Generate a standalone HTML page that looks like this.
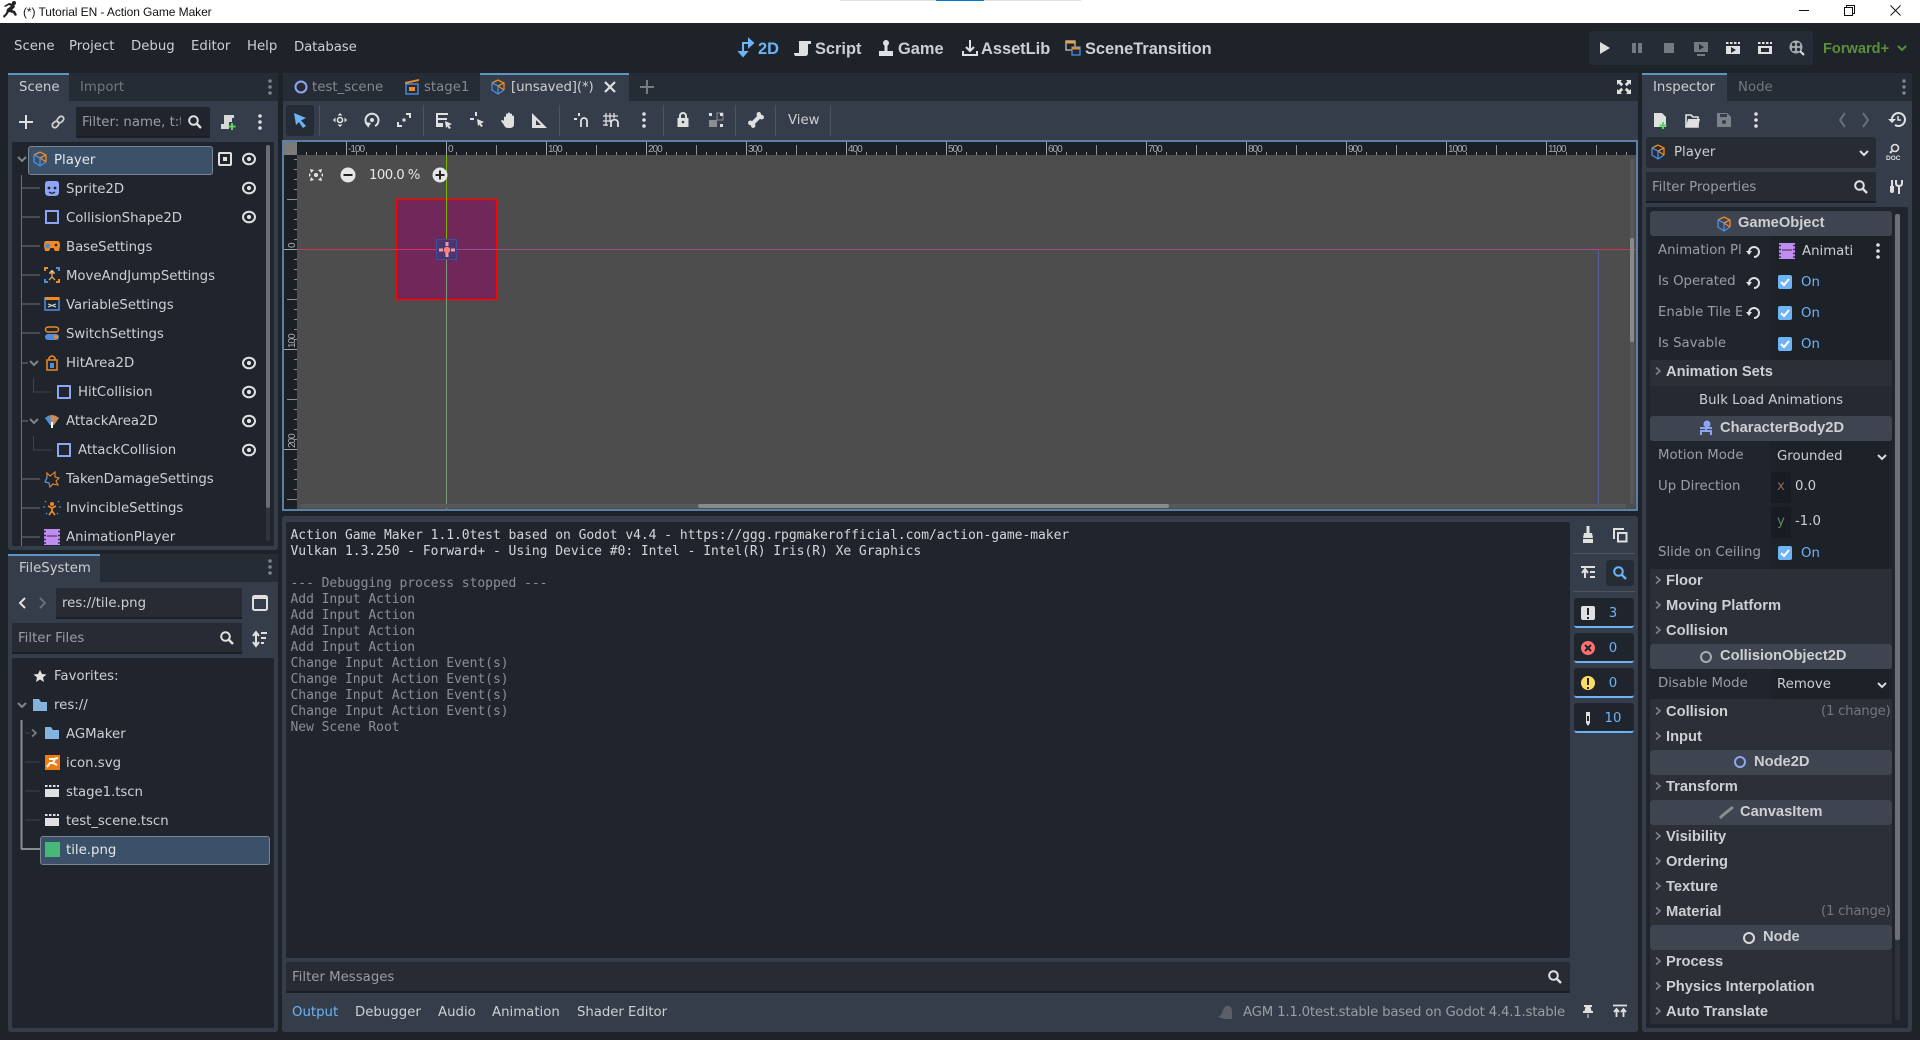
<!DOCTYPE html>
<html><head><meta charset="utf-8"><title>Action Game Maker</title>
<style>
html,body{margin:0;padding:0;width:1920px;height:1040px;overflow:hidden;background:#1e232a}
.r{position:absolute}
.t{position:absolute;white-space:nowrap;font:13.3px/20px "DejaVu Sans",sans-serif;color:#cdcfd2;margin-top:1px}
.u{margin-top:2px}
.z{margin-top:0}
.d{color:#9a9da3}
.i{color:#73767c}
.h{font:bold 16.4px/20px "Liberation Sans",sans-serif;color:#cdcfd2}
.s{font:bold 14.7px/20px "Liberation Sans",sans-serif;color:#cdcfd2}
.m{font:13px/16px "DejaVu Sans Mono","Liberation Mono",monospace;color:#8b8e94;letter-spacing:-.04px}
.c{text-align:center}
svg{position:absolute;left:0;top:0}
svg text{font-family:"Liberation Sans",sans-serif;font-size:10px;letter-spacing:-1px;fill:#a8abaf}
</style></head><body>
<!-- title bar -->
<div class="r" style="left:0;top:0;width:1920px;height:23px;background:#fff"></div>
<div class="r" style="left:840px;top:0;width:241px;height:1px;background:#e1e1e1"></div>
<div class="r" style="left:936px;top:0;width:48px;height:1px;background:#0078d4"></div>
<div class="t z" style="left:23px;top:2px;font:12px/20px 'Liberation Sans',sans-serif;color:#111;letter-spacing:-.08px">(*) Tutorial EN - Action Game Maker</div>
<!-- menu -->
<div class="t z" style="left:14px;top:37px">Scene</div>
<div class="t z" style="left:69px;top:37px">Project</div>
<div class="t z" style="left:131px;top:37px">Debug</div>
<div class="t z" style="left:191px;top:37px">Editor</div>
<div class="t z" style="left:247px;top:37px">Help</div>
<div class="t z" style="left:294px;top:38px;letter-spacing:-.1px">Database</div>
<div class="t h" style="left:758px;top:38px;color:#6cb4f5">2D</div>
<div class="t h" style="left:815px;top:38px">Script</div>
<div class="t h" style="left:898px;top:38px">Game</div>
<div class="t h" style="left:981px;top:38px">AssetLib</div>
<div class="t h" style="left:1085px;top:38px">SceneTransition</div>
<div class="r" style="left:1589px;top:31px;width:224px;height:34px;background:#262c35;border-radius:3px"></div>
<div class="t h" style="left:1823px;top:38px;color:#5a8f3c;font-size:14.6px">Forward+</div>

<!-- left scene panel -->
<div class="r" style="left:8px;top:73px;width:270px;height:477px;background:#363d4a;border-radius:3px"></div>
<div class="r" style="left:8px;top:73px;width:270px;height:28px;background:#262c36"></div>
<div class="r" style="left:8px;top:73px;width:61px;height:28px;background:#363d4a;border-top:2px solid #5f93c4;box-sizing:border-box"></div>
<div class="t" style="left:19px;top:77px">Scene</div>
<div class="t i" style="left:80px;top:77px">Import</div>
<div class="r" style="left:76px;top:107px;width:134px;height:31px;background:#20252d;border-bottom:2px solid #1a1e25;box-sizing:border-box;border-radius:2px"></div>
<div class="t d" style="left:82px;top:112px;width:99px;overflow:hidden">Filter: name, t:t</div>
<div class="r" style="left:12px;top:142px;width:262px;height:404px;background:#20252d;border-radius:2px"></div>
<div class="r" style="left:266px;top:145px;width:4px;height:396px;background:#2f343c;border-radius:2px"></div>
<div class="r" style="left:266px;top:145px;width:4px;height:363px;background:#6a6d73;border-radius:2px"></div>
<div class="r" style="left:28px;top:146px;width:185px;height:29px;background:#3b5069;border:1px solid #79858f;box-sizing:border-box;border-radius:3px"></div>
<div class="t u" style="left:54px;top:149px;color:#e4e6e8">Player</div>
<div class="t u" style="left:66px;top:178px">Sprite2D</div>
<div class="t u" style="left:66px;top:207px">CollisionShape2D</div>
<div class="t u" style="left:66px;top:236px;letter-spacing:-.05px">BaseSettings</div>
<div class="t u" style="left:66px;top:265px;letter-spacing:-.05px">MoveAndJumpSettings</div>
<div class="t u" style="left:66px;top:294px;letter-spacing:-.05px">VariableSettings</div>
<div class="t u" style="left:66px;top:323px;letter-spacing:-.05px">SwitchSettings</div>
<div class="t u" style="left:66px;top:352px">HitArea2D</div>
<div class="t u" style="left:78px;top:381px">HitCollision</div>
<div class="t u" style="left:66px;top:410px">AttackArea2D</div>
<div class="t u" style="left:78px;top:439px">AttackCollision</div>
<div class="t u" style="left:66px;top:468px;letter-spacing:-.05px">TakenDamageSettings</div>
<div class="t u" style="left:66px;top:497px;letter-spacing:-.05px">InvincibleSettings</div>
<div class="t u" style="left:66px;top:526px">AnimationPlayer</div>

<!-- filesystem panel -->
<div class="r" style="left:8px;top:554px;width:270px;height:478px;background:#363d4a;border-radius:3px"></div>
<div class="r" style="left:8px;top:554px;width:270px;height:28px;background:#262c36"></div>
<div class="r" style="left:8px;top:554px;width:92px;height:28px;background:#363d4a;border-top:2px solid #5f93c4;box-sizing:border-box"></div>
<div class="t" style="left:19px;top:558px">FileSystem</div>
<div class="r" style="left:56px;top:588px;width:186px;height:31px;background:#262b34;border-bottom:2px solid #1a1e25;box-sizing:border-box"></div>
<div class="t" style="left:62px;top:593px">res://tile.png</div>
<div class="r" style="left:12px;top:623px;width:230px;height:31px;background:#262b34;border-bottom:2px solid #1a1e25;box-sizing:border-box"></div>
<div class="t d" style="left:18px;top:628px">Filter Files</div>
<div class="r" style="left:12px;top:658px;width:262px;height:370px;background:#20252d;border-radius:2px"></div>
<div class="r" style="left:40px;top:836px;width:230px;height:29px;background:#3b5069;border:1px solid #79858f;box-sizing:border-box;border-radius:3px"></div>
<div class="t" style="left:54px;top:666px">Favorites:</div>
<div class="t" style="left:54px;top:695px">res://</div>
<div class="t u" style="left:66px;top:723px">AGMaker</div>
<div class="t u" style="left:66px;top:752px">icon.svg</div>
<div class="t u" style="left:66px;top:781px;letter-spacing:-.05px">stage1.tscn</div>
<div class="t u" style="left:66px;top:810px;letter-spacing:-.05px">test_scene.tscn</div>
<div class="t u" style="left:66px;top:839px;color:#e4e6e8">tile.png</div>

<!-- center editor -->
<div class="r" style="left:283px;top:73px;width:1355px;height:28px;background:#262c36"></div>
<div class="r" style="left:480px;top:73px;width:149px;height:28px;background:#363d4a;border-top:2px solid #5f93c4;box-sizing:border-box"></div>
<div class="t i" style="left:312px;top:77px;color:#85888e">test_scene</div>
<div class="t i" style="left:424px;top:77px;color:#85888e">stage1</div>
<div class="t" style="left:511px;top:77px;letter-spacing:-.1px">[unsaved](*)</div>
<div class="r" style="left:283px;top:101px;width:1355px;height:39px;background:#363d4a"></div>
<div class="r" style="left:286px;top:105px;width:28px;height:31px;background:#262c35;border-radius:3px"></div>
<div class="r" style="left:319px;top:105px;width:1px;height:31px;background:#4d5461"></div>
<div class="r" style="left:423px;top:105px;width:1px;height:31px;background:#4d5461"></div>
<div class="r" style="left:559px;top:105px;width:1px;height:31px;background:#4d5461"></div>
<div class="r" style="left:663px;top:105px;width:1px;height:31px;background:#4d5461"></div>
<div class="r" style="left:735px;top:105px;width:1px;height:31px;background:#4d5461"></div>
<div class="r" style="left:775px;top:105px;width:1px;height:31px;background:#4d5461"></div>
<div class="r" style="left:830px;top:105px;width:1px;height:31px;background:#4d5461"></div>
<div class="t" style="left:788px;top:110px">View</div>
<div class="r" style="left:282px;top:140px;width:1356px;height:371px;background:#5a80a8"></div>
<div class="r" style="left:284px;top:142px;width:1352px;height:367px;background:#4d4d4d"></div>
<div class="r" style="left:284px;top:142px;width:1352px;height:13px;background:#1b2027"></div>
<div class="r" style="left:284px;top:142px;width:13px;height:367px;background:#1b2027"></div>
<div class="r" style="left:284px;top:142px;width:13px;height:13px;background:#7b7b7b"></div>
<div class="t" style="left:369px;top:165px;color:#e6e6e6;letter-spacing:-.6px">100.0 %</div>

<!-- bottom panel -->
<div class="r" style="left:282px;top:516px;width:1356px;height:516px;background:#363d4a;border-radius:3px"></div>
<div class="r" style="left:286px;top:522px;width:1284px;height:436px;background:#20252d;border-radius:2px"></div>
<div class="t m" style="left:290.500px;top:527px;color:#d4d6d9">Action Game Maker 1.1.0test based on Godot v4.4 - https://ggg.rpgmakerofficial.com/action-game-maker</div>
<div class="t m" style="left:290.500px;top:543px;color:#d4d6d9">Vulkan 1.3.250 - Forward+ - Using Device #0: Intel - Intel(R) Iris(R) Xe Graphics</div>
<div class="t m" style="left:290.500px;top:575px">--- Debugging process stopped ---</div>
<div class="t m" style="left:290.500px;top:591px">Add Input Action</div>
<div class="t m" style="left:290.500px;top:607px">Add Input Action</div>
<div class="t m" style="left:290.500px;top:623px">Add Input Action</div>
<div class="t m" style="left:290.500px;top:639px">Add Input Action</div>
<div class="t m" style="left:290.500px;top:655px">Change Input Action Event(s)</div>
<div class="t m" style="left:290.500px;top:671px">Change Input Action Event(s)</div>
<div class="t m" style="left:290.500px;top:687px">Change Input Action Event(s)</div>
<div class="t m" style="left:290.500px;top:703px">Change Input Action Event(s)</div>
<div class="t m" style="left:290.500px;top:719px">New Scene Root</div>
<div class="r" style="left:286px;top:962px;width:1284px;height:31px;background:#262b34;border-bottom:2px solid #1a1e25;box-sizing:border-box"></div>
<div class="t d u" style="left:292px;top:966px">Filter Messages</div>
<div class="t u" style="left:292px;top:1001px;color:#6cb4f5">Output</div>
<div class="t u" style="left:355px;top:1001px">Debugger</div>
<div class="t u" style="left:438px;top:1001px">Audio</div>
<div class="t u" style="left:492px;top:1001px">Animation</div>
<div class="t u" style="left:577px;top:1001px;letter-spacing:-.05px">Shader Editor</div>
<div class="t d u" style="left:1243px;top:1001px;letter-spacing:-.2px">AGM 1.1.0test.stable based on Godot 4.4.1.stable</div>
<div class="r" style="left:1573px;top:553px;width:62px;height:1px;background:#4d5461"></div>
<div class="r" style="left:1573px;top:591px;width:62px;height:1px;background:#4d5461"></div>
<div class="r" style="left:1606px;top:560px;width:28px;height:26px;background:#262c35;border-radius:3px"></div>
<div class="r" style="left:1574px;top:598px;width:60px;height:30px;background:#20252d;border-bottom:2px solid #6cb4f5;box-sizing:border-box;border-radius:3px"></div>
<div class="r" style="left:1574px;top:633px;width:60px;height:30px;background:#20252d;border-bottom:2px solid #6cb4f5;box-sizing:border-box;border-radius:3px"></div>
<div class="r" style="left:1574px;top:668px;width:60px;height:30px;background:#20252d;border-bottom:2px solid #6cb4f5;box-sizing:border-box;border-radius:3px"></div>
<div class="r" style="left:1574px;top:703px;width:60px;height:30px;background:#20252d;border-bottom:2px solid #6cb4f5;box-sizing:border-box;border-radius:3px"></div>
<div class="t c" style="left:1603px;top:603px;width:20px;color:#6cb4f5">3</div>
<div class="t c" style="left:1603px;top:638px;width:20px;color:#6cb4f5">0</div>
<div class="t c" style="left:1603px;top:673px;width:20px;color:#6cb4f5">0</div>
<div class="t c" style="left:1603px;top:708px;width:20px;color:#6cb4f5">10</div>

<!-- inspector -->
<div class="r" style="left:1642px;top:73px;width:270px;height:959px;background:#363d4a;border-radius:3px"></div>
<div class="r" style="left:1642px;top:73px;width:270px;height:28px;background:#262c36"></div>
<div class="r" style="left:1642px;top:73px;width:85px;height:28px;background:#363d4a;border-top:2px solid #5f93c4;box-sizing:border-box"></div>
<div class="t" style="left:1653px;top:77px">Inspector</div>
<div class="t i" style="left:1738px;top:77px">Node</div>
<div class="r" style="left:1646px;top:137px;width:230px;height:31px;background:#262b34;border-radius:3px"></div>
<div class="t" style="left:1674px;top:142px">Player</div>
<div class="r" style="left:1646px;top:172px;width:230px;height:31px;background:#262b34;border-bottom:2px solid #1a1e25;box-sizing:border-box"></div>
<div class="t d" style="left:1652px;top:177px">Filter Properties</div>
<div class="r" style="left:1646px;top:207px;width:262px;height:821px;background:#20252d;border-radius:2px"></div>
<div class="r" style="left:1650px;top:236px;width:242px;height:124px;background:#20252d"></div>
<div class="r" style="left:1771px;top:236px;width:121px;height:124px;background:#1d2128"></div>
<div class="r" style="left:1650px;top:360px;width:242px;height:26px;background:#2a2f38"></div>
<div class="r" style="left:1650px;top:386px;width:242px;height:30px;background:#252a32"></div>
<div class="r" style="left:1771px;top:441px;width:121px;height:128px;background:#1d2128"></div>
<div class="r" style="left:1771px;top:472px;width:20px;height:31px;background:#181c22;border-radius:2px"></div>
<div class="r" style="left:1771px;top:507px;width:20px;height:31px;background:#181c22;border-radius:2px"></div>
<div class="r" style="left:1650px;top:569px;width:242px;height:75px;background:#2a2f38"></div>
<div class="r" style="left:1771px;top:669px;width:121px;height:30px;background:#1d2128"></div>
<div class="r" style="left:1650px;top:699px;width:242px;height:51px;background:#2a2f38"></div>
<div class="r" style="left:1650px;top:775px;width:242px;height:25px;background:#2a2f38"></div>
<div class="r" style="left:1650px;top:825px;width:242px;height:100px;background:#2a2f38"></div>
<div class="r" style="left:1650px;top:950px;width:242px;height:74px;background:#2a2f38"></div>
<div class="r" style="left:1650px;top:211px;width:242px;height:25px;background:#3e4450;border-radius:3px"></div>
<div class="r" style="left:1650px;top:416px;width:242px;height:25px;background:#3e4450;border-radius:3px"></div>
<div class="r" style="left:1650px;top:644px;width:242px;height:25px;background:#3e4450;border-radius:3px"></div>
<div class="r" style="left:1650px;top:750px;width:242px;height:25px;background:#3e4450;border-radius:3px"></div>
<div class="r" style="left:1650px;top:800px;width:242px;height:25px;background:#3e4450;border-radius:3px"></div>
<div class="r" style="left:1650px;top:925px;width:242px;height:25px;background:#3e4450;border-radius:3px"></div>
<div class="r" style="left:1895px;top:214px;width:5px;height:806px;background:#2d323a;border-radius:2px"></div>
<div class="r" style="left:1895px;top:214px;width:5px;height:726px;background:#6d7078;border-radius:2px"></div>
<div class="t s" style="left:1738px;top:212px">GameObject</div>
<div class="t s" style="left:1720px;top:417px">CharacterBody2D</div>
<div class="t s" style="left:1720px;top:645px">CollisionObject2D</div>
<div class="t s" style="left:1754px;top:751px">Node2D</div>
<div class="t s" style="left:1740px;top:801px">CanvasItem</div>
<div class="t s" style="left:1763px;top:926px">Node</div>
<div class="t d" style="left:1658px;top:240px;width:84px;overflow:hidden">Animation Pl</div>
<div class="t d" style="left:1658px;top:271px">Is Operated</div>
<div class="t d" style="left:1658px;top:302px;width:84px;overflow:hidden">Enable Tile E</div>
<div class="t d" style="left:1658px;top:333px">Is Savable</div>
<div class="t" style="left:1802px;top:241px">Animati</div>
<div class="t" style="left:1801px;top:272px;color:#6cb4f5">On</div>
<div class="t" style="left:1801px;top:303px;color:#6cb4f5">On</div>
<div class="t" style="left:1801px;top:334px;color:#6cb4f5">On</div>
<div class="t s" style="left:1666px;top:361px">Animation Sets</div>
<div class="t c" style="left:1650px;top:390px;width:242px">Bulk Load Animations</div>
<div class="t d" style="left:1658px;top:445px">Motion Mode</div>
<div class="t" style="left:1777px;top:446px">Grounded</div>
<div class="t d" style="left:1658px;top:476px">Up Direction</div>
<div class="t" style="left:1795px;top:476px">0.0</div>
<div class="t" style="left:1795px;top:511px">-1.0</div>
<div class="t" style="left:1777px;top:476px;color:#8d6a5c">x</div>
<div class="t" style="left:1777px;top:511px;color:#5d8a68">y</div>
<div class="t d" style="left:1658px;top:542px">Slide on Ceiling</div>
<div class="t" style="left:1801px;top:543px;color:#6cb4f5">On</div>
<div class="t s" style="left:1666px;top:570px">Floor</div>
<div class="t s" style="left:1666px;top:595px">Moving Platform</div>
<div class="t s" style="left:1666px;top:620px">Collision</div>
<div class="t d" style="left:1658px;top:673px">Disable Mode</div>
<div class="t" style="left:1777px;top:674px">Remove</div>
<div class="t s" style="left:1666px;top:701px">Collision</div>
<div class="t i" style="left:1821px;top:701px;letter-spacing:-.25px">(1 change)</div>
<div class="t s" style="left:1666px;top:726px">Input</div>
<div class="t s" style="left:1666px;top:776px">Transform</div>
<div class="t s" style="left:1666px;top:826px">Visibility</div>
<div class="t s" style="left:1666px;top:851px">Ordering</div>
<div class="t s" style="left:1666px;top:876px">Texture</div>
<div class="t s" style="left:1666px;top:901px">Material</div>
<div class="t i" style="left:1821px;top:901px;letter-spacing:-.25px">(1 change)</div>
<div class="t s" style="left:1666px;top:951px">Process</div>
<div class="t s" style="left:1666px;top:976px">Physics Interpolation</div>
<div class="t s" style="left:1666px;top:1001px">Auto Translate</div>

<!-- overlay graphics -->
<svg width="1920" height="1040" viewBox="0 0 1920 1040" fill="none">
<defs>
<pattern id="hs" x="446" y="152" width="10" height="3" patternUnits="userSpaceOnUse"><rect width="1" height="3" fill="#8a8d91"/></pattern>
<pattern id="hm" x="396" y="145" width="100" height="10" patternUnits="userSpaceOnUse"><rect width="1" height="10" fill="#8a8d91"/></pattern>
<pattern id="hl" x="346" y="142" width="100" height="13" patternUnits="userSpaceOnUse"><rect width="1" height="13" fill="#a0a3a6"/></pattern>
<pattern id="vs" x="294" y="159" width="3" height="10" patternUnits="userSpaceOnUse"><rect width="3" height="1" fill="#8a8d91"/></pattern>
<pattern id="vm" x="287" y="199" width="10" height="100" patternUnits="userSpaceOnUse"><rect width="10" height="1" fill="#8a8d91"/></pattern>
<pattern id="vl" x="284" y="249" width="13" height="100" patternUnits="userSpaceOnUse"><rect width="13" height="1" fill="#a0a3a6"/></pattern>
<g id="eye"><ellipse rx="6" ry="5.3" stroke="#e0e0e0" stroke-width="2"/><circle r="2.1" fill="#e0e0e0"/></g>
<g id="cube" stroke-width="1.3"><path d="M0-7L6-4V3M6 3L0-1L6-4M0-7L-6-4" stroke="#f08a24"/><path d="M-6-4V3L0 7L6 3M0-1V7M-6-4L0-1" stroke="#4b8ee0"/></g>
<g id="box"><rect x="-6" y="-6" width="12" height="12" stroke="#8da5f3" stroke-width="2"/></g>
<g id="ar"><path d="M-4-2L0 2L4-2" stroke="#80848a" stroke-width="2"/></g>
<g id="ch"><path d="M-2-3.5L2 0L-2 3.5" stroke="#7e8289" stroke-width="1.6"/></g>
<g id="rev"><path d="M-5 0A5 5 0 1 1 0 5" stroke="#e0e0e0" stroke-width="2"/><path d="M-8-1H-2L-5 3Z" fill="#e0e0e0"/></g>
<g id="chk"><rect x="-7" y="-7" width="14" height="14" rx="2" fill="#6cb4f5"/><path d="M-4 0L-1 3L4-3" stroke="#fff" stroke-width="2"/></g>
<g id="dots"><circle cy="-6" r="1.8" fill="#e0e0e0"/><circle r="1.8" fill="#e0e0e0"/><circle cy="6" r="1.8" fill="#e0e0e0"/></g>
<g id="dd"><circle cy="-6" r="1.8" fill="#7e8289"/><circle r="1.8" fill="#7e8289"/><circle cy="6" r="1.8" fill="#7e8289"/></g>
<g id="mag"><circle cx="-1.5" cy="-1.5" r="4.3" stroke="#e0e0e0" stroke-width="2"/><path d="M1.5 1.5L6 6" stroke="#e0e0e0" stroke-width="2.4"/></g>
<g id="clap"><path d="M-7-2H7V6H-7Z" fill="#e0e0e0"/><path d="M-7-6H-4.5V-4H-7ZM-3-6H-.5V-4H-3ZM1-6H3.5V-4H1ZM5-6H7V-4H5Z" fill="#e0e0e0"/></g>
<g id="folder"><path d="M-7-6H-1L1-3H7V6H-7Z" fill="#84b3e0"/></g>
<g id="film"><path d="M-8-8H8V8H-8Z" fill="#c08cf0"/><path d="M-8-5.500H-6M-8-1.500H-6M-8 2.500H-6M-8 6H-6M8-5.500H6M8-1.500H6M8 2.500H6M8 6H6" stroke="#3a2c4a" stroke-width="1.500"/><path d="M-5-1H5" stroke="#3a2c4a" stroke-width="1"/></g>
<path id="fs" d="M-7-7H-2L-3.500-5.500L-.8-2.800L-2.800-.8L-5.500-3.500L-7-2Z" fill="#e0e0e0"/>
</defs>

<!-- title icon and window controls -->
<path d="M3 16L6 13L7 9L11 6L9 5L5 7L4 6L9 3L14 4L15 7L12 10L15 11L17 15L15 16L13 13L9 12L7 15L4 18Z" fill="#222"/><circle cx="14" cy="3" r="2" fill="#222"/>
<path d="M1799 10.500H1809" stroke="#111"/>
<path d="M1844.500 7.500H1852.500V15.500H1844.500ZM1846.500 7.500V5.500H1854.500V13.500H1852.500" stroke="#111"/>
<path d="M1890.500 5.500L1900.500 15.500M1900.500 5.500L1890.500 15.500" stroke="#111"/>

<!-- main screens icons -->
<g transform="translate(747,48)" stroke="#6cb4f5" stroke-width="2"><path d="M-4 7V-5H3"/><path d="M2-8.500L6-5L2-1.500Z" fill="#6cb4f5"/><path d="M-7.500 4L-4 8L-.5 4Z" fill="#6cb4f5"/></g>
<path d="M799 42Q798 41 800 41H811Q808 42 808 45V53Q808 56 805 56H796Q794 56 794 53H799Z" fill="#dfe0e2"/><path d="M804 41H811V44H807Z" fill="#dfe0e2"/>
<g transform="translate(886,48)" fill="#dfe0e2"><circle cy="-5" r="3"/><rect x="-1.500" y="-4" width="3" height="7"/><rect x="-7" y="3" width="14" height="5"/></g>
<g transform="translate(970,48)" stroke="#dfe0e2" stroke-width="2"><path d="M0-8V3M-4-1L0 3L4-1M-7 3V7H7V3"/></g>
<g transform="translate(1073,48)"><rect x="-7" y="-7" width="9" height="9" stroke="#bfc2c6" stroke-width="1.3"/><rect x="-7" y="-7" width="9" height="2.500" fill="#f0a040"/><rect x="-1" y="-1" width="8" height="8" fill="#1e2a3c" stroke="#4b8ee0" stroke-width="1.3"/><rect x="-1" y="-1" width="8" height="2.500" fill="#f08a24"/></g>

<!-- run bar -->
<path d="M1600 42L1610 48L1600 54Z" fill="#e0e0e0"/>
<path d="M1632 43H1636V53H1632ZM1638 43H1642V53H1638Z" fill="#757a82"/>
<rect x="1664" y="43" width="10" height="10" fill="#757a82"/>
<g fill="#757a82"><path d="M1694 42H1708V52H1694Z"/><path d="M1697 54H1705V56H1697Z"/></g><path d="M1699 44L1704 47L1699 50Z" fill="#262c35"/>
<g transform="translate(1733,48)"><use href="#clap"/><path d="M-2-1L3 2L-2 5Z" fill="#262c35"/></g>
<g transform="translate(1765,48)"><use href="#clap"/><rect x="-4" y="0" width="8" height="4" fill="#262c35"/></g>
<circle cx="1796" cy="47" r="6.500" fill="#a8abaf"/><circle cx="1793.500" cy="44.500" r="1.700" fill="#262c35"/><circle cx="1798.500" cy="44.500" r="1.700" fill="#262c35"/><circle cx="1793.500" cy="49.500" r="1.700" fill="#262c35"/><circle cx="1798.500" cy="49.500" r="1.700" fill="#262c35"/><path d="M1800 51L1804 55" stroke="#e0e0e0" stroke-width="2"/>
<path d="M1898 46L1902 50L1906 46" stroke="#5a8f3c" stroke-width="2"/>

<!-- panel kebabs -->
<use href="#dd" x="270" y="87"/><use href="#dd" x="270" y="567"/><use href="#dd" x="1904" y="87"/>

<!-- scene toolbar -->
<path d="M26 115V129M19 122H33" stroke="#e0e0e0" stroke-width="2"/>
<g transform="translate(58,122) rotate(-45)" stroke="#d0d0d0" stroke-width="1.800"><rect x="-7" y="-2.500" width="7" height="5" rx="2.500"/><rect x="0" y="-2.500" width="7" height="5" rx="2.500"/></g>
<use href="#mag" x="195" y="122"/>
<path d="M224 115H234V118H232V122H229V129H221V124H224Z" fill="#d8d8d8"/><path d="M232 123V130M228.500 126.500H235.500" stroke="#5fd35f" stroke-width="2"/>
<use href="#dots" x="260" y="122"/>

<!-- tree lines -->
<path d="M21.500 175V546M21 188H40M21 217H40M21 246H40M21 275H40M21 304H40M21 333H40M21 363H28M21 421H28M21 479H40M21 508H40M21 537H40" stroke="#6d7076"/>
<path d="M33.500 378V392H52M33.500 436V450H52" stroke="#3e434c"/>
<use href="#ar" x="22" y="159"/><use href="#ar" x="34" y="363"/><use href="#ar" x="34" y="421"/>
<use href="#cube" x="40" y="159"/>
<rect x="219" y="153" width="12" height="12" rx="1" stroke="#e0e0e0" stroke-width="2"/><rect x="223" y="157" width="4" height="4" fill="#e0e0e0"/>
<use href="#eye" x="249" y="159"/><use href="#eye" x="249" y="188"/><use href="#eye" x="249" y="217"/><use href="#eye" x="249" y="363"/><use href="#eye" x="249" y="392"/><use href="#eye" x="249" y="421"/><use href="#eye" x="249" y="450"/>
<g transform="translate(52,189)"><path d="M-7-5Q-7-8-4-8H4Q7-8 7-5V3Q7 7 3 7H-3Q-7 7-7 3Z" fill="#8da5f3"/><circle cx="-3" cy="-1" r="1.400" fill="#20252d"/><circle cx="3" cy="-1" r="1.400" fill="#20252d"/><path d="M-3 3Q0 5.500 3 3" stroke="#20252d" stroke-width="1.300"/></g>
<use href="#box" x="52" y="217"/><use href="#box" x="64" y="392"/><use href="#box" x="64" y="450"/>
<g transform="translate(52,246)"><path d="M-6-5H6Q8-5 8 0L7 5H3L1.500 2H-1.500L-3 5H-7L-8 0Q-8-5-6-5Z" fill="#f08a24"/><circle cx="-4.500" cy="0" r="2.500" fill="#4b8ee0"/><circle cx="4" cy="-1" r="1.300" fill="#20252d"/></g>
<g transform="translate(52,275)" stroke-width="2"><path d="M-7-4V-7H-4M7 4V7H4" stroke="#f08a24"/><path d="M7-4V-7H4M-7 4V7H-4" stroke="#4b8ee0"/><circle cy="-3" r="1.800" fill="#f0d0a0" stroke="none"/><path d="M0-1V2L-3 5M0 2L3 5M-3-2H3" stroke="#d8a060" stroke-width="1.400"/></g>
<g transform="translate(52,304)"><rect x="-7" y="-6" width="14" height="12" stroke="#4b8ee0" stroke-width="1.500"/><rect x="-7" y="-7" width="14" height="3" fill="#f08a24"/><path d="M-4 0L4 3M4 0L-4 3" stroke="#d8dade"/></g>
<g transform="translate(52,333)"><rect x="-6.500" y="-6" width="13" height="5" rx="2.500" stroke="#f08a24" stroke-width="1.500"/><rect x="-7" y="1" width="14" height="6" rx="3" fill="#4b8ee0"/><circle cx="4" cy="4" r="2" fill="#f08a24"/></g>
<g transform="translate(52,363)"><rect x="-5" y="-3" width="10" height="10" stroke="#f08a24" stroke-width="1.500"/><path d="M-3-3V-5Q0-9 3-5V-3" stroke="#f08a24" stroke-width="1.500"/><rect x="-2" y="0" width="4" height="5" fill="#4b8ee0"/></g>
<g transform="translate(52,421)"><path d="M-7-3Q0-9 7-3L2 4H-2Z" fill="#c88b54"/><path d="M-7-3Q-4-5-2-5.500L-.5 4H-2Z" fill="#4b8ee0"/><rect x="-1" y="1" width="2" height="6" fill="#fff"/></g>
<path d="M47 473L50 476L55 472L55 477L59 478L56 481L58 485L53 484L50 487L49 483L45 482L47 478Z" stroke="#f08a24" stroke-width="1.100"/>
<path d="M47 477L45 482L49 483L50 487" stroke="#4b8ee0" stroke-width="1.200"/>
<g transform="translate(52,508)"><circle cy="-4" r="2" fill="#f08a24"/><path d="M-4-2L0 0L4-2M0 0V3M0 3L-3 7M0 3L3 7" stroke="#f08a24" stroke-width="1.700"/><path d="M-7-1H-9M7-1H9M-6-6L-7-7M6-6L7-7M-5 5L-6 6M5 5L6 6" stroke="#4b8ee0" stroke-width="1.300"/></g>
<use href="#film" x="52" y="537"/>

<!-- filesystem icons -->
<path d="M25 598L20 603L25 608" stroke="#e0e0e0" stroke-width="2"/><path d="M40 598L45 603L40 608" stroke="#6a6f78" stroke-width="2"/>
<rect x="253" y="596" width="14" height="14" rx="1.500" stroke="#e0e0e0" stroke-width="2"/><rect x="253" y="596" width="14" height="3" fill="#e0e0e0"/>
<use href="#mag" x="227" y="638"/>
<path d="M256 633V645M253 636L256 632L259 636M253 642L256 646L259 642" stroke="#e0e0e0" stroke-width="2"/><path d="M261 633H267M261 638H266M261 643H264" stroke="#e0e0e0" stroke-width="2"/>
<path d="M40 670L42 674L46.500 674.500L43 677.500L44 682L40 679.500L36 682L37 677.500L33.500 674.500L38 674Z" fill="#e0e0e0"/>
<use href="#ar" x="22" y="705"/><use href="#folder" x="40" y="705"/><use href="#folder" x="52" y="733"/>
<path d="M21.500 720V849M21 849H40" stroke="#8a8d91" stroke-width="2"/>
<path d="M25 733H30M25 762H40M25 791H40M25 820H40" stroke="#3e434c"/>
<use href="#ch" x="34" y="733"/>
<rect x="45" y="755" width="15" height="15" fill="#f07c10"/><path d="M47 767L50 763H53L55 759H49M53 763L57 765M54 759L58 758" stroke="#fff" stroke-width="2"/>
<use href="#clap" x="52" y="791"/><use href="#clap" x="52" y="820"/>
<rect x="45" y="842" width="15" height="15" fill="#48b878"/>

<!-- editor tab icons -->
<circle cx="301" cy="87" r="5.500" stroke="#8da5f3" stroke-width="2"/>
<g transform="translate(412,87)"><rect x="-6" y="-3" width="12" height="10" stroke="#4b8ee0" stroke-width="1.400"/><path d="M-7-3L7-6V-8L-7-5Z" fill="#f08a24"/><rect x="-3" y="0" width="6" height="4" fill="#f08a24"/></g>
<use href="#cube" x="498" y="87"/>
<path d="M605 82L615 92M615 82L605 92" stroke="#e0e0e0" stroke-width="2.200"/>
<path d="M647 80V94M640 87H654" stroke="#777b82" stroke-width="2"/>
<g transform="translate(1624,87)"><use href="#fs"/><use href="#fs" transform="scale(-1,1)"/><use href="#fs" transform="scale(1,-1)"/><use href="#fs" transform="scale(-1,-1)"/></g>

<!-- canvas toolbar icons -->
<path d="M294 114L306 119L301 121.500L306 127L303 129L299 123L296 126Z" fill="#6cb4f5" transform="translate(0,-1)"/>
<g transform="translate(340,120)"><circle r="2.500" stroke="#e0e0e0" stroke-width="1.600"/><path d="M0-7L-2.500-4.500H2.500ZM0 7L-2.500 4.500H2.500ZM-7 0L-4.500-2.500V2.500ZM7 0L4.500-2.500V2.500Z" fill="#e0e0e0"/></g>
<g transform="translate(372,120)"><path d="M-3 6A6.500 6.500 0 1 1 3 6" stroke="#e0e0e0" stroke-width="2"/><circle r="2" fill="#e0e0e0"/><path d="M-6 2L-1 3L-4 8Z" fill="#e0e0e0"/></g>
<g transform="translate(404,120)"><rect x="-1.500" y="-1.500" width="3" height="3" fill="#e0e0e0"/><path d="M2-6H6V-2M-2 6H-6V2" stroke="#e0e0e0" stroke-width="2"/></g>
<g transform="translate(443,120)"><path d="M-7-7H5V-5H-5V-2H4V0H-5V3H0V7H-7Z" fill="#e0e0e0"/><path d="M2 1L9 4L6 5.500L8 8L6 9L4.500 6.500L3 8Z" fill="#e0e0e0"/></g>
<g transform="translate(477,120)"><path d="M-7-1H-3M-1-8V-4" stroke="#e0e0e0" stroke-width="2"/><path d="M0-1L7 2L4 3.500L6 6L4 7L2.500 4.500L1 6Z" fill="#e0e0e0"/></g>
<path transform="translate(2,0)" d="M502 121V117Q503 116 504 117V120V114Q505 113 506 114V120V113Q507 112 508 113V120V114Q509 113 510 114V121V116Q511 115 512 116V124Q512 128 508 128H506Q503 128 502 125L499 121Q500 119 502 121Z" fill="#e0e0e0"/>
<path d="M532 113V128H547ZM536 120V125H541Z" fill="#e0e0e0" fill-rule="evenodd"/>
<g transform="translate(581,120)"><path d="M0 7V1A3 3 0 0 1 6 1V7" stroke="#e0e0e0" stroke-width="1.800"/><path d="M-7-1H-4M-2-7V-4" stroke="#e0e0e0" stroke-width="2"/></g>
<g transform="translate(611,120)"><path d="M-5-7V6M-1-7V2M-8-4H7M-8 1H0M-8 5H-3M3-7V-2" stroke="#e0e0e0" stroke-width="1.300"/><path d="M0 7V3A3 3 0 0 1 7 3V7" stroke="#e0e0e0" stroke-width="1.800"/></g>
<use href="#dots" x="644" y="120"/>
<g transform="translate(683,120)"><path d="M-3-2V-4A3 3 0 0 1 3-4V-2" stroke="#e0e0e0" stroke-width="2"/><path d="M-5.500-2H5.500V7H-5.500Z" fill="#e0e0e0"/><circle cy="2" r="1.300" fill="#363d4a"/></g>
<g transform="translate(716,120)"><path d="M-7 0H1V7H-7Z" fill="#8a8d91"/><path d="M1-7H7V0H1Z" stroke="#8a8d91"/><path d="M-7-7H-4V-4H-7ZM4-7H7V-4H4ZM4 4H7V7H4Z" fill="#e0e0e0"/></g>
<g transform="translate(756,120) rotate(-45)"><rect x="-5" y="-2" width="10" height="4" fill="#e0e0e0"/><circle cx="-6" cy="-2" r="2.300" fill="#e0e0e0"/><circle cx="-6" cy="2" r="2.300" fill="#e0e0e0"/><circle cx="6" cy="-2" r="2.300" fill="#e0e0e0"/><circle cx="6" cy="2" r="2.300" fill="#e0e0e0"/></g>

<!-- rulers -->
<rect x="297" y="152" width="1339" height="3" fill="url(#hs)"/>
<rect x="297" y="145" width="1339" height="10" fill="url(#hm)"/>
<rect x="297" y="142" width="1339" height="13" fill="url(#hl)"/>
<rect x="294" y="155" width="3" height="354" fill="url(#vs)"/>
<rect x="287" y="155" width="10" height="354" fill="url(#vm)"/>
<rect x="284" y="155" width="13" height="354" fill="url(#vl)"/>
<text x="348" y="152">-100</text><text x="448" y="152">0</text><text x="548" y="152">100</text><text x="648" y="152">200</text><text x="748" y="152">300</text><text x="848" y="152">400</text><text x="948" y="152">500</text><text x="1048" y="152">600</text><text x="1148" y="152">700</text><text x="1248" y="152">800</text><text x="1348" y="152">900</text><text x="1448" y="152">1000</text><text x="1548" y="152">1100</text>
<text transform="translate(295,248) rotate(-90)">0</text><text transform="translate(295,348) rotate(-90)">100</text><text transform="translate(295,448) rotate(-90)">200</text>

<!-- scene objects -->
<rect x="396.500" y="199.500" width="100" height="100" fill="#70275a" stroke="#ff0000" stroke-width="1.500"/>
<path d="M297 249.500H446" stroke="#c9355a"/>
<path d="M447 249.500H1598" stroke="#a04a90"/>
<path d="M1598 249.500H1636" stroke="#c9355a"/>
<path d="M1598.500 250V509" stroke="#5a5aa0"/>
<path d="M446.500 155V249" stroke="#7cb400"/>
<path d="M446.500 250V509" stroke="#7d9d7a"/>
<rect x="436.500" y="239.500" width="20" height="20" fill="#4d3572" stroke="#3f4f99"/>
<path d="M447 242V246M447 253V257M439 250H443M451 250H455" stroke="#f09a9a" stroke-width="3"/>
<circle cx="447" cy="250" r="3.200" fill="#ff8080"/>
<g transform="translate(316,175)" fill="#e6e6e6"><circle r="2"/><path d="M-6-6L-2-5L-5-2ZM6-6L2-5L5-2ZM-6 6L-2 5L-5 2ZM6 6L2 5L5 2ZM-7-2V2L-5 0ZM7-2V2L5 0Z"/></g>
<circle cx="348" cy="175" r="7.500" fill="#e6e6e6"/><path d="M343.500 175H352.500" stroke="#222" stroke-width="2"/>
<circle cx="440" cy="175" r="7.500" fill="#e6e6e6"/><path d="M435.500 175H444.500M440 170.500V179.500" stroke="#222" stroke-width="2"/>
<!-- canvas scrollbars -->
<rect x="1630" y="158" width="4" height="346" rx="2" fill="#585858"/><rect x="1630" y="238" width="4" height="104" rx="2" fill="#8a8a8a"/>
<rect x="300" y="504" width="1326" height="4" rx="2" fill="#585858"/><rect x="698" y="504" width="471" height="4" rx="2" fill="#8a8a8a"/>

<!-- bottom right icons -->
<g transform="translate(1588,535)" fill="#e0e0e0"><rect x="-1.500" y="-9" width="3" height="7"/><path d="M-4-2H4L5 3H-5Z"/><rect x="-5" y="4" width="10" height="4"/></g>
<path d="M1614 539V529H1624" stroke="#e0e0e0" stroke-width="2"/><rect x="1618" y="533" width="8.500" height="8.500" stroke="#e0e0e0" stroke-width="2"/>
<path d="M1581 567H1595M1590 572H1595M1590 577H1595" stroke="#e0e0e0" stroke-width="2"/><path d="M1585 578V571M1582 573L1585 569L1588 573" stroke="#e0e0e0" stroke-width="2"/>
<g transform="translate(1620,573)"><circle cx="-1.500" cy="-1.500" r="4.300" stroke="#6cb4f5" stroke-width="2"/><path d="M1.500 1.500L6 6" stroke="#6cb4f5" stroke-width="2.400"/></g>
<rect x="1581" y="606" width="14" height="14" rx="2" fill="#e0e0e0"/><path d="M1588 608V615M1588 617V619" stroke="#20252d" stroke-width="2"/>
<circle cx="1588" cy="648" r="7" fill="#ff7070"/><path d="M1585 645L1591 651M1591 645L1585 651" stroke="#20252d" stroke-width="2"/>
<circle cx="1588" cy="683" r="7" fill="#ffdd60"/><path d="M1588 678V685M1588 687V689" stroke="#20252d" stroke-width="2"/>
<path d="M1586 712H1590V723L1588 726L1586 723Z" fill="#e0e0e0"/><rect x="1587" y="716" width="2" height="5" fill="#20252d"/>
<use href="#mag" x="1555" y="977"/>
<path d="M1218 1017Q1222 1015 1223 1010Q1225 1005 1229 1006Q1232 1007 1232 1012V1019H1224Z" fill="#5a5f68"/>
<g fill="#e0e0e0"><path d="M1584 1005H1592V1007H1590.500L1591.500 1011H1593V1013H1583V1011H1584.500L1585.500 1007H1584Z"/><rect x="1587.500" y="1014" width="1" height="4"/></g>
<path d="M1613 1005.500H1627M1616.500 1017V1009M1614 1012L1616.500 1009L1619 1012M1623.500 1017V1009M1621 1012L1623.500 1009L1626 1012" stroke="#e0e0e0" stroke-width="1.800"/>

<!-- inspector icons -->
<path d="M1654 113H1662L1666 117V127H1654Z" fill="#e0e0e0"/><path d="M1663 122V129M1659.500 125.500H1666.500" stroke="#5fd35f" stroke-width="2"/>
<path d="M1686 115H1691L1693 117H1698V127H1686Z" stroke="#e0e0e0" stroke-width="1.600"/><path d="M1688 119H1700L1698 127H1686Z" fill="#e0e0e0"/>
<path d="M1717 113H1727L1731 117V127H1717Z" fill="#7c818a"/><circle cx="1724" cy="122" r="2" fill="#363d4a"/><rect x="1720" y="114" width="7" height="3" fill="#363d4a"/>
<use href="#dots" x="1756" y="120"/>
<path d="M1845 113L1840 120L1845 127" stroke="#6a6f78" stroke-width="2"/><path d="M1863 113L1868 120L1863 127" stroke="#6a6f78" stroke-width="2"/>
<path d="M1892 120A6.500 6.500 0 1 1 1895 125" stroke="#e0e0e0" stroke-width="2"/><path d="M1888 119H1896L1892 123Z" fill="#e0e0e0"/><path d="M1898 116V120H1901" stroke="#e0e0e0" stroke-width="1.500"/>
<use href="#cube" x="1658" y="152"/>
<path d="M1860 151L1864 155L1868 151" stroke="#e0e0e0" stroke-width="2"/>
<circle cx="1895" cy="148" r="3.500" stroke="#e0e0e0" stroke-width="1.600"/><path d="M1892 151L1890 153" stroke="#e0e0e0" stroke-width="2"/>
<text x="1886" y="160" style="font-size:6.500px;font-weight:bold;letter-spacing:0;fill:#e0e0e0">DOC</text>
<use href="#mag" x="1861" y="187"/>
<path d="M1890 180V186M1890 186V191Q1890 193 1892 193Q1894 193 1894 191V186Z" fill="#e0e0e0"/><path d="M1892 180V186" stroke="#e0e0e0" stroke-width="2"/>
<path d="M1899 194V186M1896 180V183Q1896 186 1899 186Q1902 186 1902 183V180" stroke="#e0e0e0" stroke-width="2"/>
<use href="#cube" x="1724" y="224"/>
<use href="#film" x="1787" y="251"/>
<use href="#dots" x="1878" y="251"/>
<use href="#rev" x="1754" y="252"/><use href="#rev" x="1754" y="283"/><use href="#rev" x="1754" y="313"/>
<use href="#chk" x="1785" y="282"/><use href="#chk" x="1785" y="313"/><use href="#chk" x="1785" y="344"/><use href="#chk" x="1785" y="553"/>
<use href="#ch" x="1658" y="371"/><use href="#ch" x="1658" y="580"/><use href="#ch" x="1658" y="605"/><use href="#ch" x="1658" y="630"/><use href="#ch" x="1658" y="711"/><use href="#ch" x="1658" y="736"/><use href="#ch" x="1658" y="786"/><use href="#ch" x="1658" y="836"/><use href="#ch" x="1658" y="861"/><use href="#ch" x="1658" y="886"/><use href="#ch" x="1658" y="911"/><use href="#ch" x="1658" y="961"/><use href="#ch" x="1658" y="986"/><use href="#ch" x="1658" y="1011"/>
<g transform="translate(1706,428)" stroke="#8da5f3" stroke-width="2"><circle cx="1" cy="-4" r="2.500" fill="#8da5f3"/><path d="M-6 0H6M0 0V3L-5 3V7M0 3L5 3V7"/></g>
<circle cx="1706" cy="657" r="5" stroke="#a8abaf" stroke-width="2"/>
<path d="M1878 455L1882 459L1886 455M1878 683L1882 687L1886 683" stroke="#d8dade" stroke-width="2"/>
<circle cx="1740" cy="762" r="5" stroke="#8da5f3" stroke-width="2"/>
<path d="M1720 818L1723 815M1722.500 815.500L1733 807" stroke="#8a8d91" stroke-width="3"/>
<circle cx="1749" cy="938" r="5" stroke="#d8dade" stroke-width="2"/>
</svg>
</body></html>
